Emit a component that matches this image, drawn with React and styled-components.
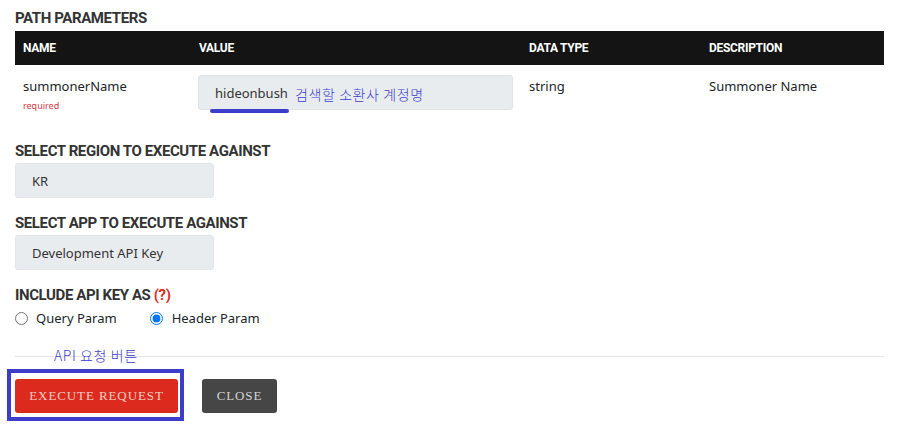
import React from 'react';
import styled, { createGlobalStyle } from 'styled-components';

const GlobalStyle = createGlobalStyle`
  body {
    margin: 0;
    background: #ffffff;
    font-family: "Noto Sans", "Open Sans", sans-serif;
    color: #212529;
  }
`;

const Page = styled.div`
  width: 899px;
  height: 428px;
  padding: 9px 15px 0 15px;
  box-sizing: border-box;
  overflow: hidden;
`;

const SectionTitle = styled.h3`
  margin: 0;
  font-family: Roboto, "Liberation Sans", sans-serif;
  font-size: 15px;
  font-weight: 700;
  line-height: 18px;
  letter-spacing: -0.4px;
  color: #333333;
  margin-top: ${p => p.$top || 0}px;
  > em {
    font-style: normal;
    color: #dc2a1f;
  }
`;

const Table = styled.div`
  margin-top: 4px;
  display: grid;
  grid-template-columns: 176px 330px 180px 1fr;
`;

const HeadCell = styled.div`
  background: #141414;
  height: 34px;
  display: flex;
  align-items: center;
  padding: 0 8px;
  font-family: Roboto, "Liberation Sans", sans-serif;
  font-size: 12px;
  font-weight: 700;
  letter-spacing: -0.3px;
  color: #ffffff;
`;

const Cell = styled.div`
  padding: 10px 8px 0 8px;
  height: 53px;
  box-sizing: border-box;
  font-size: 13px;
  line-height: 22px;
  color: #212529;
  ${p => p.$input && 'padding-left: 7px;'}
`;

const Required = styled.div`
  font-size: 9px;
  line-height: 14px;
  color: #dc3545;
  margin-top: 2px;
`;

const InputBox = styled.div`
  position: relative;
  width: 315px;
  height: 35px;
  box-sizing: border-box;
  background: #e9ecef;
  border: 1px solid #dfe3e7;
  border-radius: 3px;
  display: flex;
  align-items: center;
  padding: 0 0 0 16px;
  font-size: 13px;
  color: #333;
`;

const Underline = styled.span`
  position: absolute;
  left: 11px;
  top: 33px;
  width: 79px;
  height: 4px;
  border-radius: 2px;
  background: #3d3dcc;
`;

const Note = styled.span`
  font-family: "Noto Sans CJK KR", "Noto Sans", sans-serif;
  font-size: 14px;
  font-weight: 300;
  letter-spacing: 0.6px;
  color: #3d3dcc;
  position: absolute;
  left: ${p => p.$left}px;
  top: ${p => p.$top}px;
  white-space: nowrap;
`;

const SelectBox = styled.div`
  margin-top: 3px;
  width: 199px;
  height: 35px;
  box-sizing: border-box;
  background: #e9ecef;
  border: 1px solid #e2e5e9;
  border-radius: 3px;
  display: flex;
  align-items: center;
  padding-left: 16px;
  font-size: 13px;
  color: #333;
`;

const RadioRow = styled.div`
  display: flex;
  align-items: center;
  margin-top: 4px;
  height: 20px;
`;

const RadioLabel = styled.label`
  display: flex;
  align-items: center;
  font-size: 13px;
  color: #212529;
  margin-right: ${p => p.$gap || 0}px;
  input {
    margin: 0 ${p => p.$inner || 8}px 0 0;
    width: 13px;
    height: 13px;
  }
`;

const Footer = styled.div`
  position: relative;
  margin-top: 28px;
  border-top: 1px solid #e5e5e5;
  padding-top: 22px;
  display: flex;
  gap: 24px;
`;

const ButtonWrap = styled.div`
  position: relative;
`;

const Frame = styled.span`
  position: absolute;
  left: -8px;
  top: -10px;
  right: -6px;
  bottom: -8px;
  border: 4px solid #3d3dcc;
  pointer-events: none;
`;

const Button = styled.button`
  height: 34px;
  width: ${p => p.$w}px;
  padding: 0;
  border: none;
  border-radius: 3px;
  background: ${p => (p.$primary ? '#dc2a1f' : '#464646')};
  color: ${p => (p.$primary ? '#f4cfc2' : '#d4d4d4')};
  font-family: "Liberation Serif", serif;
  font-size: 13px;
  letter-spacing: 0.9px;
  text-transform: uppercase;
  cursor: pointer;
`;

export default function App() {
  return (
    <Page>
      <GlobalStyle />
      <SectionTitle>PATH PARAMETERS</SectionTitle>
      <Table>
        <HeadCell>NAME</HeadCell>
        <HeadCell>VALUE</HeadCell>
        <HeadCell>DATA TYPE</HeadCell>
        <HeadCell>DESCRIPTION</HeadCell>
        <Cell>
          summonerName
          <Required>required</Required>
        </Cell>
        <Cell $input>
          <InputBox>
            hideonbush
            <Underline />
            <Note $left={96} $top={7}>검색할 소환사 계정명</Note>
          </InputBox>
        </Cell>
        <Cell>string</Cell>
        <Cell>Summoner Name</Cell>
      </Table>

      <SectionTitle $top={24}>SELECT REGION TO EXECUTE AGAINST</SectionTitle>
      <SelectBox>KR</SelectBox>

      <SectionTitle $top={16}>SELECT APP TO EXECUTE AGAINST</SectionTitle>
      <SelectBox>Development API Key</SelectBox>

      <SectionTitle $top={16}>
        INCLUDE API KEY AS <em>(?)</em>
      </SectionTitle>
      <RadioRow>
        <RadioLabel $gap={33}>
          <input type="radio" name="keyas" />
          Query Param
        </RadioLabel>
        <RadioLabel $inner={9}>
          <input type="radio" name="keyas" defaultChecked />
          Header Param
        </RadioLabel>
      </RadioRow>

      <Footer>
        <Note $left={39} $top={-12}>API 요청 버튼</Note>
        <ButtonWrap>
          <Button $primary $w={163}>Execute Request</Button>
          <Frame />
        </ButtonWrap>
        <Button $w={75}>Close</Button>
      </Footer>
    </Page>
  );
}
